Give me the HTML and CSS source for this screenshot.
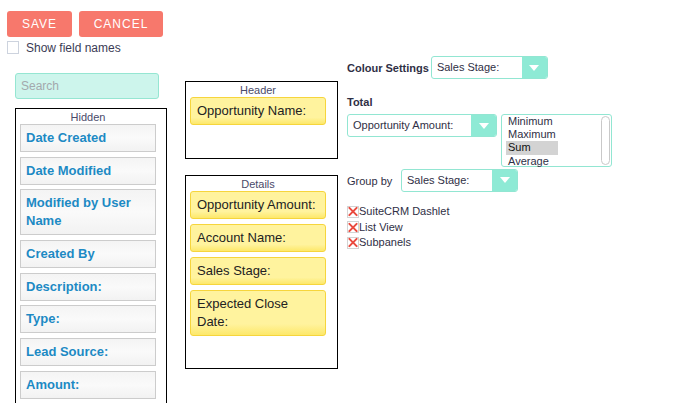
FILE: index.html
```html
<!DOCTYPE html>
<html>
<head>
<meta charset="utf-8">
<link rel="stylesheet" href="styles.css">
</head>
<body>
<div class="toolbar">
  <button class="btn btn-save">SAVE</button>
  <button class="btn btn-cancel">CANCEL</button>
</div>
<label class="show-names"><span class="cb"></span><span>Show field names</span></label>
<div class="main">
  <div class="col-left">
    <div class="search">Search</div>
    <div class="panel panel-hidden">
      <div class="panel-title">Hidden</div>
      <div class="field grey">Date Created</div>
      <div class="field grey">Date Modified</div>
      <div class="field grey">Modified by User Name</div>
      <div class="field grey">Created By</div>
      <div class="field grey">Description:</div>
      <div class="field grey">Type:</div>
      <div class="field grey">Lead Source:</div>
      <div class="field grey">Amount:</div>
    </div>
  </div>
  <div class="col-mid">
    <div class="panel panel-header">
      <div class="panel-title">Header</div>
      <div class="field yellow">Opportunity Name:</div>
    </div>
    <div class="panel panel-details">
      <div class="panel-title">Details</div>
      <div class="field yellow">Opportunity Amount:</div>
      <div class="field yellow">Account Name:</div>
      <div class="field yellow">Sales Stage:</div>
      <div class="field yellow">Expected Close Date:</div>
    </div>
  </div>
  <div class="col-right">
    <div class="row row-colour">
      <span class="lbl bold">Colour Settings</span>
      <div class="sel sel-117"><span class="sel-text">Sales Stage:</span><span class="sel-arrow"><svg width="10" height="6" viewBox="0 0 10 6"><path d="M0 0H10L5 6Z" fill="#fff"/></svg></span></div>
    </div>
    <div class="lbl bold total-lbl">Total</div>
    <div class="row row-total">
      <div class="sel sel-150"><span class="sel-text">Opportunity Amount:</span><span class="sel-arrow"><svg width="10" height="6" viewBox="0 0 10 6"><path d="M0 0H10L5 6Z" fill="#fff"/></svg></span></div>
      <div class="listbox">
        <div class="opts">
          <div class="opt">Minimum</div>
          <div class="opt">Maximum</div>
          <div class="opt selected">Sum</div>
          <div class="opt">Average</div>
        </div>
        <div class="scroll"></div>
      </div>
    </div>
    <div class="row row-group">
      <span class="lbl">Group by</span>
      <div class="sel sel-117"><span class="sel-text">Sales Stage:</span><span class="sel-arrow"><svg width="10" height="6" viewBox="0 0 10 6"><path d="M0 0H10L5 6Z" fill="#fff"/></svg></span></div>
    </div>
    <div class="checks">
      <div class="chk"><span class="xbox"><svg width="11" height="11" viewBox="0 0 11 11"><path d="M1.5 1.5L9.5 9.5M9.5 1.5L1.5 9.5" stroke="#ea4a3e" stroke-width="2.2" stroke-linecap="round"/></svg></span>SuiteCRM Dashlet</div>
      <div class="chk"><span class="xbox"><svg width="11" height="11" viewBox="0 0 11 11"><path d="M1.5 1.5L9.5 9.5M9.5 1.5L1.5 9.5" stroke="#ea4a3e" stroke-width="2.2" stroke-linecap="round"/></svg></span>List View</div>
      <div class="chk"><span class="xbox"><svg width="11" height="11" viewBox="0 0 11 11"><path d="M1.5 1.5L9.5 9.5M9.5 1.5L1.5 9.5" stroke="#ea4a3e" stroke-width="2.2" stroke-linecap="round"/></svg></span>Subpanels</div>
    </div>
  </div>
</div>
</body>
</html>
```
FILE: styles.css
```css
* { box-sizing: border-box; }
html, body { margin: 0; padding: 0; background: #fff; }
body {
  width: 673px; height: 403px; overflow: hidden;
  font-family: "Liberation Sans", Arial, sans-serif;
  color: #333;
}
.toolbar { display: flex; gap: 7px; padding: 11px 0 0 7px; }
.btn {
  height: 26px; border: none; border-radius: 3px;
  background: #f7786c; color: #fff;
  font-family: "Liberation Sans", Arial, sans-serif;
  font-size: 12px; letter-spacing: 1px; padding: 0;
}
.btn-save { width: 65px; }
.btn-cancel { width: 84px; }
.show-names {
  display: flex; align-items: center; gap: 7px;
  margin: 4px 0 0 7px; height: 13px;
  font-size: 12px; color: #3b3b55;
}
.cb { width: 12px; height: 13px; border: 1px solid #cdd3de; background: #fff; }
.main { display: flex; align-items: flex-start; padding-left: 15px; margin-top: 2px; }
.col-left { width: 152px; margin-top: 17px; }
.search {
  width: 144px; height: 26px; border: 1px solid #95e6d2; border-radius: 3px;
  background: #cdf5ec; color: #a3a9ad; font-size: 12px;
  padding: 5px 0 0 5px;
}
.panel { border: 1px solid #000; background: #fff; }
.panel-title {
  text-align: center; font-size: 11px; line-height: 14px; height: 15px;
  color: #4a4a6a; padding-top: 1px;
}
.panel-hidden { margin-top: 9px; height: 296px; padding: 0 10px 0 4px; border-bottom: none; overflow: hidden; }
.field {
  border: 1px solid #ccc; padding: 4px 6px; line-height: 18px; font-size: 13px;
  margin-bottom: 5px;
}
.field.grey {
  background: linear-gradient(#f4f4f4, #fafafa 50%, #f2f2f2);
  color: #1d8ac4; font-weight: bold; padding-left: 5px;
  margin-bottom: 4.7px;
}
.field.yellow {
  border-color: #f6d53c; border-radius: 3px;
  background: linear-gradient(#fff39e, #fff39e 75%, #fde86a);
  color: #222;
}
.col-mid { width: 153px; margin-left: 18px; margin-top: 25px; }
.panel-header { height: 78px; padding: 0 11px 0 4px; }
.panel-details { height: 194px; margin-top: 16px; padding: 0 11px 0 4px; }
.col-right { margin-left: 9px; font-size: 11px; color: #2f2f45; }
.row { display: flex; align-items: center; }
.bold { font-weight: bold; }
.row-colour { height: 23px; gap: 2px; }
.sel {
  display: flex; height: 23px; border: 1px solid #92e6d2; border-radius: 3px;
  background: #fff; overflow: hidden;
}
.sel-117 { width: 117px; }
.sel-150 { width: 150px; }
.sel-text { flex: 1; padding: 0 5px; line-height: 21px; font-size: 11px; color: #2f2f45; white-space: nowrap; }
.sel-arrow {
  width: 25px; background: #8eead5; display: flex; align-items: center; justify-content: center;
}
.total-lbl { margin-top: 17px; line-height: 12px; height: 12px; }
.row-total { align-items: flex-start; gap: 4px; margin-top: 6px; }
.listbox {
  width: 111px; height: 53px; border: 1px solid #92e6d2; border-radius: 3px;
  display: flex; padding: 0 1px 1px 4px;
}
.opts { flex: 1; padding-top: 0; }
.opt { line-height: 13px; height: 13px; padding-left: 2px; width: 52px; color: #2f2f45; }
.opt.selected { background: #d3d3d3; color: #111; height: 14px; }
.scroll { width: 9px; margin: 1px 0 0 0; height: 49px; border: 1px solid #c9c9c9; border-radius: 5px; background: #fff; }
.row-group { margin-top: 2px; height: 22px; gap: 0; }
.row-group .lbl { width: 54px; margin-top: 1px; }
.row-group .sel { height: 23px; }
.checks { margin-top: 13px; }
.chk { display: flex; align-items: center; height: 15.5px; line-height: 13px; color: #2f2f45; }
.xbox {
  width: 12px; height: 12px; border: 1px solid #d3d3d3; display: flex; align-items: center; justify-content: center;
  margin-right: 0; background: #fff;
}
.xbox svg { display: block; }
```
